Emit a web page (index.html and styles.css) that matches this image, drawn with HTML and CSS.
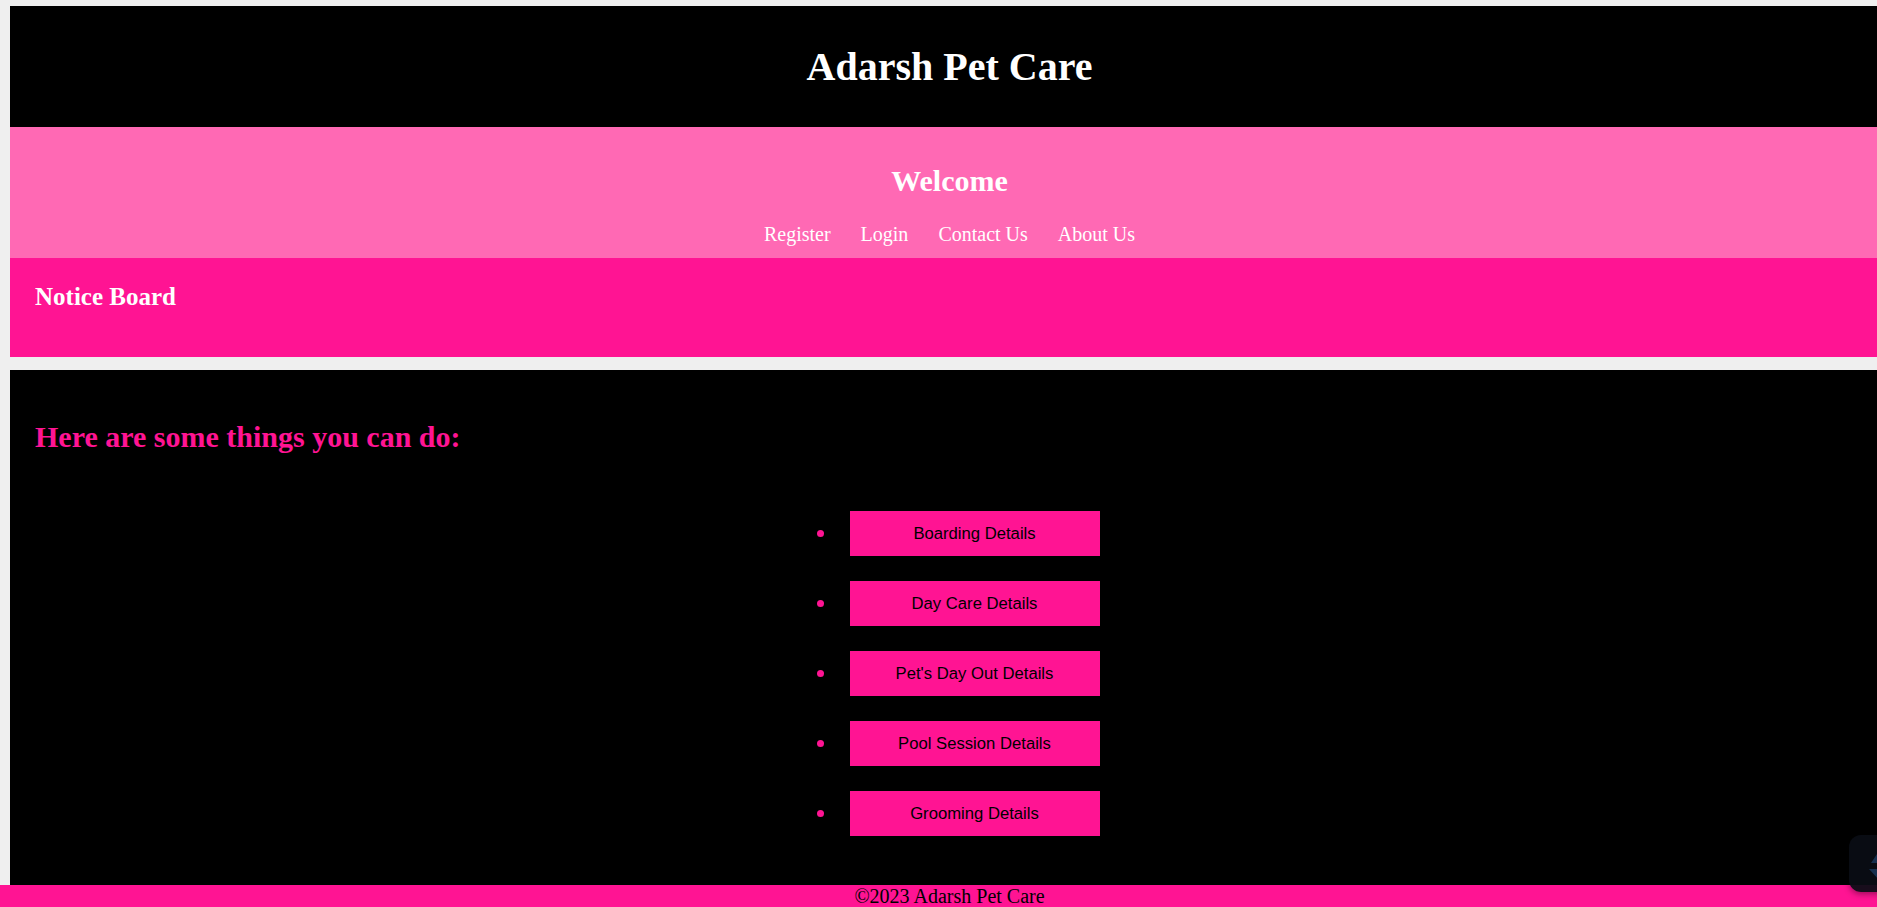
FILE: index.html
```html
<!DOCTYPE html>
<html lang="en">
<head>
<meta charset="utf-8">
<title>Adarsh Pet Care</title>
<link rel="stylesheet" href="styles.css">
</head>
<body>
<div class="top">
  <header class="site-header">
    <h1>Adarsh Pet Care</h1>
  </header>
  <nav class="nav">
    <h2>Welcome</h2>
    <div class="links">
      <a href="#">Register</a>
      <a href="#">Login</a>
      <a href="#">Contact Us</a>
      <a href="#">About Us</a>
    </div>
  </nav>
  <section class="notice">
    <h3>Notice Board</h3>
  </section>
</div>
<main class="main">
  <h2>Here are some things you can do:</h2>
  <ul class="actions">
    <li><button class="btn">Boarding Details</button></li>
    <li><button class="btn">Day Care Details</button></li>
    <li><button class="btn">Pet's Day Out Details</button></li>
    <li><button class="btn">Pool Session Details</button></li>
    <li><button class="btn">Grooming Details</button></li>
  </ul>
</main>
<footer class="footer">©2023 Adarsh Pet Care</footer>
<div class="widget">
  <svg width="48" height="57" viewBox="0 0 48 57">
    <path d="M22 28 L30 16 L40 16 L32 28 Z" fill="#17304f"/>
    <path d="M20 34 L32 34 L30 45 Z" fill="#17304f"/>
  </svg>
</div>
</body>
</html>
```
FILE: styles.css
```css
html {
  overflow: hidden;
  background: #efefef;
}
body {
  margin: 6px 0 0 10px;
  width: 1879px;
  font-family: "Liberation Serif", "Times New Roman", serif;
  background: #efefef;
}
.top {
  margin-bottom: 13px;
}
.site-header {
  background: #000;
  color: #fff;
  text-align: center;
  padding: 10px 0;
}
.site-header h1 {
  font-size: 40px;
  margin: 26.8px 0;
  font-weight: bold;
}
.nav {
  background: #ff69b4;
  color: #fff;
  text-align: center;
  padding: 13px 0 11.5px;
}
.nav h2 {
  font-size: 30px;
  margin: 24.5px 0 25px;
}
.links {
  display: flex;
  justify-content: center;
  font-size: 20px;
}
.links a {
  color: #fff;
  text-decoration: none;
  margin: 0 15px;
}
.notice {
  background: #ff1493;
  color: #fff;
  padding: 25px 25px 25px;
}
.notice h3 {
  font-size: 25px;
  margin: 0 0 21px;
}
.main {
  background: #000;
  padding: 25px 25px 120px;
}
.main h2 {
  color: #ff1493;
  font-size: 30px;
  margin: 25px 0 0;
}
.actions {
  list-style: none;
  margin: 57.5px 0 0;
  padding: 0 0 0 50px;
  display: flex;
  flex-direction: column;
  gap: 25px;
}
.actions li {
  display: flex;
  justify-content: center;
  align-items: center;
}
.actions li::before {
  content: "";
  width: 7px;
  height: 7px;
  border-radius: 50%;
  background: #ff1493;
  margin-left: -32.5px;
  margin-right: 25.5px;
}
.btn {
  width: 250px;
  height: 45px;
  border: none;
  padding: 0;
  background: #ff1493;
  color: #000;
  font-family: "Liberation Sans", Arial, sans-serif;
  font-size: 16.67px;
}
.footer {
  position: fixed;
  left: 0;
  bottom: 0;
  width: 1899px;
  height: 22px;
  background: #ff1493;
  color: #000;
  font-size: 20px;
  text-align: center;
}
.widget {
  position: fixed;
  left: 1849px;
  top: 835px;
  width: 48px;
  height: 57px;
  border-radius: 12px;
  background: rgba(10, 13, 20, 0.94);
  box-shadow: 0 2px 6px rgba(0, 0, 0, 0.4);
}
.widget svg {
  display: block;
}
```
